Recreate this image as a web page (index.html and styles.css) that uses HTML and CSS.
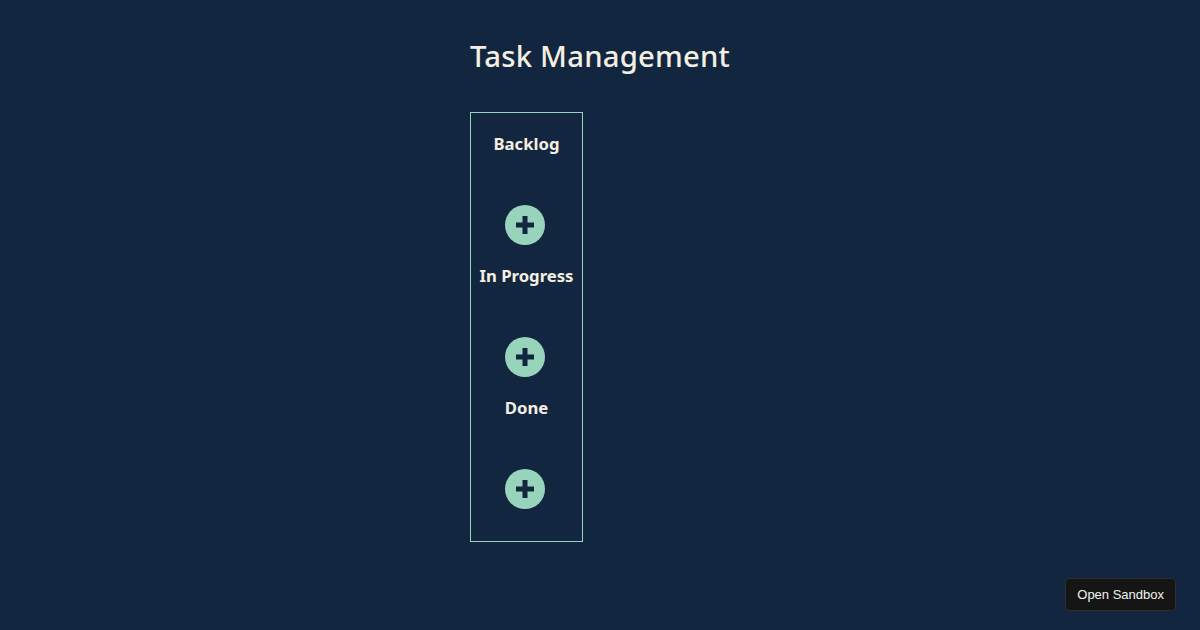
FILE: index.html
```html
<!DOCTYPE html>
<html lang="en">
<head>
    <meta charset="UTF-8">
    <meta name="viewport" content="width=device-width, initial-scale=1.0">
    <title>Task Management</title>
    <link rel="stylesheet" href="styles.css">
</head>
<body>
    <div class="app">
        <h1>Task Management</h1>

        <div class="board">
            <div class="column">
                <h3>Backlog</h3>
                <ul class="task-list"></ul>
                <button class="add-btn" aria-label="Add task">
                    <svg viewBox="0 0 40 40" width="40" height="40">
                        <circle cx="20" cy="20" r="20" fill="#98d3bb"/>
                        <path d="M20 11v18M11 20h18" stroke="#13263f" stroke-width="5"/>
                    </svg>
                </button>
            </div>
            <div class="column">
                <h3>In Progress</h3>
                <ul class="task-list"></ul>
                <button class="add-btn" aria-label="Add task">
                    <svg viewBox="0 0 40 40" width="40" height="40">
                        <circle cx="20" cy="20" r="20" fill="#98d3bb"/>
                        <path d="M20 11v18M11 20h18" stroke="#13263f" stroke-width="5"/>
                    </svg>
                </button>
            </div>
            <div class="column">
                <h3>Done</h3>
                <ul class="task-list"></ul>
                <button class="add-btn" aria-label="Add task">
                    <svg viewBox="0 0 40 40" width="40" height="40">
                        <circle cx="20" cy="20" r="20" fill="#98d3bb"/>
                        <path d="M20 11v18M11 20h18" stroke="#13263f" stroke-width="5"/>
                    </svg>
                </button>
            </div>
        </div>
    </div>

    <button class="sandbox-btn">Open Sandbox</button>
</body>
</html>
```

FILE: styles.css
```css
body {
    font-family: 'Noto Sans', sans-serif;
    background-color: #13263f;
    color: #f3efe2;
    margin: 0;
    padding: 0;
    height: 630px;
    overflow: hidden;
}

.app {
    width: fit-content;
    margin: 0 auto;
    padding-top: 32px;
}

h1 {
    font-size: 29.3px;
    font-weight: 500;
    line-height: 48px;
    margin: 0 0 32px 0;
    text-align: center;
    letter-spacing: 0.2px;
}

.board {
    width: 113px;
    box-sizing: border-box;
    border: 1px solid #98d3bb;
    padding: 19px 4px 13px;
}

.column {
    display: flex;
    flex-direction: column;
    align-items: center;
    margin-bottom: 19px;
}

.column h3 {
    font-size: 16.7px;
    font-weight: 700;
    line-height: 24px;
    margin: 0;
    white-space: nowrap;
}

.task-list {
    list-style: none;
    margin: 0;
    padding: 0;
    min-height: 49px;
}

.add-btn {
    width: 40px;
    height: 40px;
    padding: 0;
    border: none;
    background: none;
    cursor: pointer;
    margin-left: -3px;
}

.add-btn svg {
    display: block;
}

.sandbox-btn {
    position: fixed;
    right: 24px;
    bottom: 19px;
    background-color: #151515;
    color: #f2f2f2;
    border: 1px solid #2e2e2e;
    border-radius: 4px;
    font-family: 'Liberation Sans', Arial, sans-serif;
    font-size: 13px;
    padding: 0 11px;
    height: 33px;
    white-space: nowrap;
}
```
